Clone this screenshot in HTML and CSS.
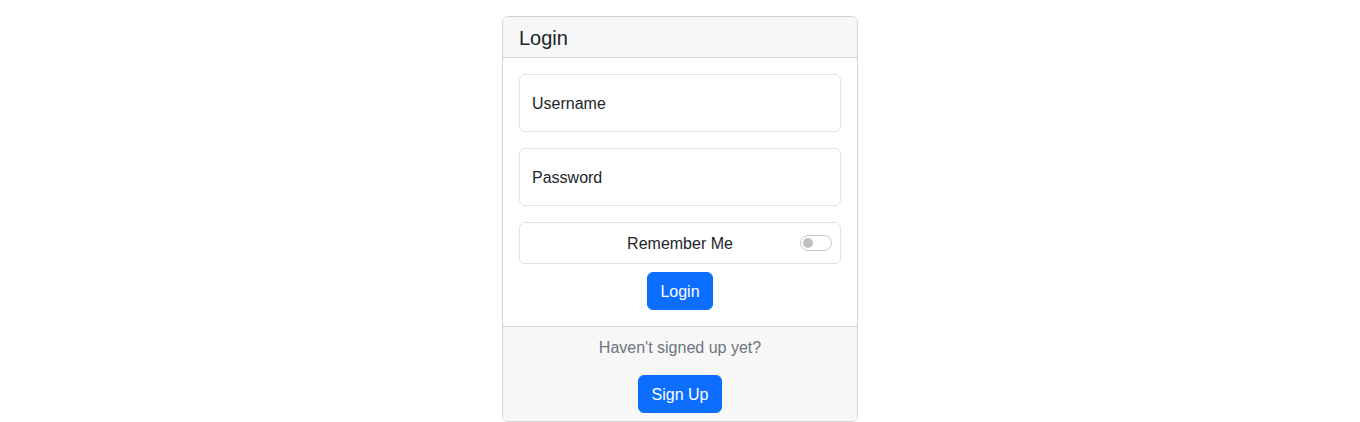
FILE: index.html
```html
<!DOCTYPE html>
<html lang="en">
<head>
<meta charset="utf-8">
<title>Login</title>
<link rel="stylesheet" href="styles.css">
</head>
<body>
<div class="page">
  <div class="card">
    <div class="card-header"><h5 class="card-title">Login</h5></div>
    <form class="card-body">
      <div class="field"><span class="field-label">Username</span></div>
      <div class="field"><span class="field-label">Password</span></div>
      <div class="remember">
        <span class="remember-text">Remember Me</span>
        <span class="switch"><span class="knob"></span></span>
      </div>
      <div class="actions"><button type="button" class="btn">Login</button></div>
    </form>
    <div class="card-footer">
      <p class="muted">Haven't signed up yet?</p>
      <button type="button" class="btn btn-wide">Sign Up</button>
    </div>
  </div>
</div>
</body>
</html>
```
FILE: styles.css
```css
* { box-sizing: border-box; }
html, body { margin: 0; padding: 0; background: #fff; }
body {
  font-family: "Liberation Sans", Arial, sans-serif;
  font-size: 16px;
  line-height: 24px;
  color: #212529;
}
.page {
  display: flex;
  justify-content: center;
  padding-top: 16px;
}
.card {
  width: 356px;
  border: 1px solid #d3d3d4;
  border-radius: 6px;
  overflow: hidden;
  background: #fff;
}
.card-header {
  background: #f7f7f7;
  border-bottom: 1px solid #d3d3d4;
  padding: 9px 16px 7px;
}
.card-title {
  margin: 0;
  font-size: 20px;
  line-height: 24px;
  font-weight: 500;
}
.card-body {
  padding: 16px;
  margin: 0;
  display: flex;
  flex-direction: column;
}
.field {
  height: 58px;
  border: 1px solid #dee2e6;
  border-radius: 6px;
  padding: 2px 12px 0;
  display: flex;
  align-items: center;
  margin-bottom: 16px;
}
.field-label { color: #212529; }
.remember {
  height: 42px;
  border: 1px solid #dee2e6;
  border-radius: 6px;
  padding-top: 2px;
  display: flex;
  align-items: center;
  justify-content: center;
  position: relative;
  margin-bottom: 8px;
}
.switch {
  position: absolute;
  right: 8px;
  top: 12px;
  width: 32px;
  height: 16px;
  border: 1px solid #c8c8c8;
  border-radius: 8px;
  background: #fff;
}
.knob {
  position: absolute;
  left: 2px;
  top: 2px;
  width: 10px;
  height: 10px;
  border-radius: 50%;
  background: #bfbfbf;
}
.actions { display: flex; justify-content: center; }
.btn {
  font-family: inherit;
  font-size: 16px;
  line-height: 24px;
  color: #fff;
  background: #0d6efd;
  border: 1px solid #0d6efd;
  border-radius: 6px;
  padding: 7px 12px 5px;
  cursor: pointer;
}
.btn-wide { padding-left: 13px; padding-right: 13px; }
.card-footer {
  background: #f7f7f7;
  border-top: 1px solid #d3d3d4;
  padding: 8px 16px;
  display: flex;
  flex-direction: column;
  align-items: center;
}
.muted {
  margin: 1px 0 15px;
  color: #6c757d;
}
```
